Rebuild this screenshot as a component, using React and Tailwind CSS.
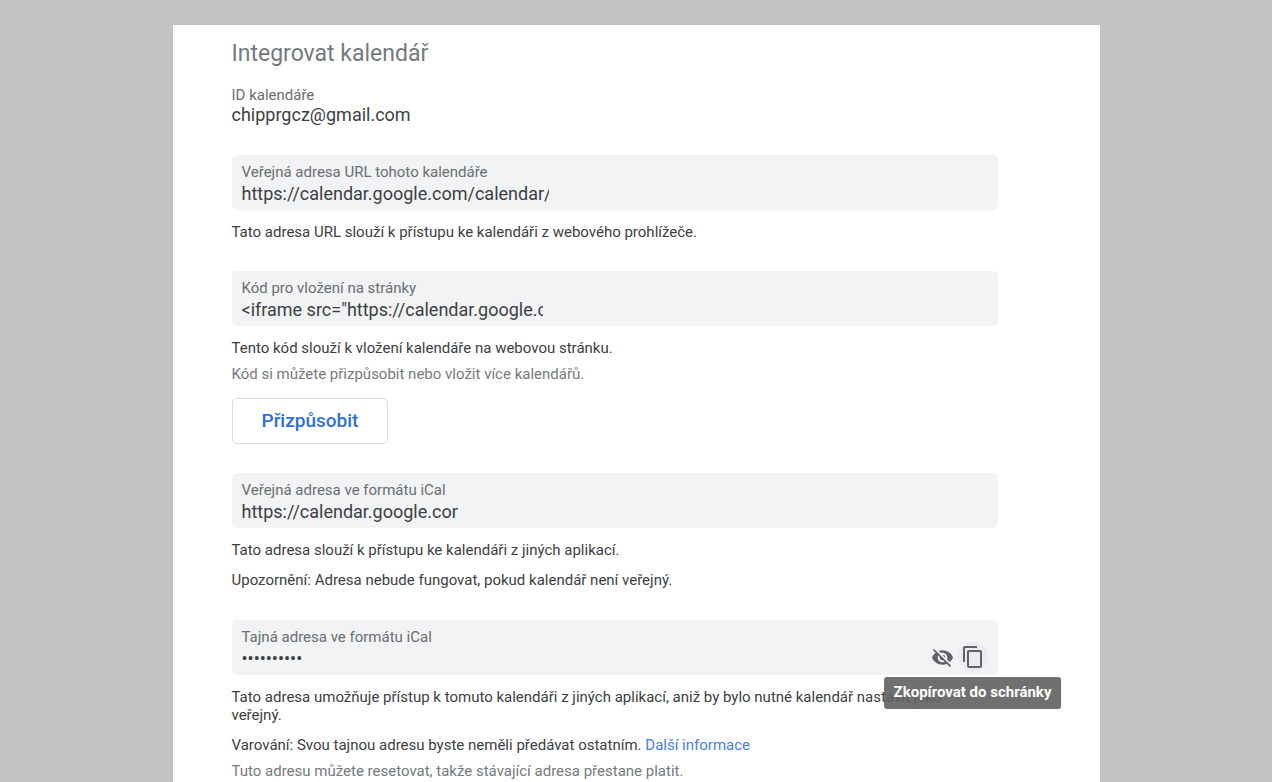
import React, { useState } from 'react';
import { MdVisibility, MdVisibilityOff } from 'react-icons/md';

// Grey box with a small label above a read-only value
const AddressField = ({ id, label, value, inputClass, type = 'text', children }) => {
  return (
    <div className="flex items-end justify-between h-[55px] px-[10px] bg-[#f1f3f4] rounded-[5px]">
      <div className="flex flex-col h-full pt-2">
        <label htmlFor={id} className="text-[15px] leading-[18px] text-[#6b6e72]">
          {label}
        </label>
        <input
          id={id}
          type={type}
          value={value}
          readOnly
          className={`h-6 text-[18px] text-[#3c4043] bg-transparent outline-none ${inputClass}`}
        />
      </div>
      {children}
    </div>
  );
};

const CopyIcon = () => (
  <svg viewBox="0 0 24 24" className="w-6 h-6" fill="currentColor" aria-hidden="true">
    <path d="M16 1H4c-1.1 0-2 .9-2 2v14h2V3h12V1zm3 4H8c-1.1 0-2 .9-2 2v14c0 1.1.9 2 2 2h11c1.1 0 2-.9 2-2V7c0-1.1-.9-2-2-2zm0 16H8V7h11v14z" />
  </svg>
);

const SecretActions = ({ visible, onToggle }) => {
  return (
    <div className="flex items-center pb-[3px] text-[#5f6368]">
      <button
        type="button"
        aria-label="Zobrazit adresu"
        onClick={onToggle}
        className="flex items-center justify-center w-[30px] h-[30px] rounded-full"
      >
        {visible ? <MdVisibility size={23} /> : <MdVisibilityOff size={23} />}
      </button>
      <div className="relative">
        <button
          type="button"
          aria-labelledby="copy-tooltip"
          className="flex items-center justify-center w-[30px] h-[30px] rounded-full bg-[#e9ebec]"
        >
          <CopyIcon />
        </button>
        {/* Tooltip hangs below the copy button */}
        <div
          id="copy-tooltip"
          role="tooltip"
          className="absolute top-full left-1/2 z-10 mt-[5px] -translate-x-1/2 px-[10px] h-8 rounded-[3px] bg-[#616161]/90 text-[15px] leading-[30px] font-bold text-white whitespace-nowrap"
        >
          Zkopírovat do schránky
        </div>
      </div>
    </div>
  );
};

const App = () => {
  const [visible, setVisible] = useState(false);

  return (
    <div className="flex flex-col min-h-screen px-4 pt-[25px] bg-[#c2c2c2] font-['Roboto',sans-serif] text-[15px] leading-[18px] text-[#3c4043]">
      <main className="flex-1 w-full max-w-[927px] mx-auto pt-[13px] pl-[59px] pr-[102px] bg-white">
        <h1 className="text-[23px] leading-8 text-[#757a7e]">Integrovat kalendář</h1>

        <div className="mt-4">
          <p className="text-[#6b6e72]">ID kalendáře</p>
          <p className="text-[18px] leading-[22px]">chipprgcz@gmail.com</p>
        </div>

        {/* Public URL */}
        <section className="mt-[29px]">
          <AddressField
            id="public-url"
            label="Veřejná adresa URL tohoto kalendáře"
            value="https://calendar.google.com/calendar/"
            inputClass="w-[307px]"
          />
          <p className="mt-[13px]">Tato adresa URL slouží k přístupu ke kalendáři z webového prohlížeče.</p>
        </section>

        {/* Embed code */}
        <section className="mt-[30px]">
          <AddressField
            id="embed-code"
            label="Kód pro vložení na stránky"
            value={'<iframe src="https://calendar.google.com'}
            inputClass="w-[301px]"
          />
          <p className="mt-[13px]">Tento kód slouží k vložení kalendáře na webovou stránku.</p>
          <p className="mt-2 text-[#757a7e]">Kód si můžete přizpůsobit nebo vložit více kalendářů.</p>
          <button
            type="button"
            className="mt-[15px] h-[46px] px-[29px] border border-[#dadce0] rounded-[5px] text-[19px] font-medium text-[#2f6fd6]"
          >
            Přizpůsobit
          </button>
        </section>

        {/* Public iCal address */}
        <section className="mt-[29px]">
          <AddressField
            id="public-ical"
            label="Veřejná adresa ve formátu iCal"
            value="https://calendar.google.com"
            inputClass="w-[216px]"
          />
          <p className="mt-[13px]">Tato adresa slouží k přístupu ke kalendáři z jiných aplikací.</p>
          <p className="mt-3">Upozornění: Adresa nebude fungovat, pokud kalendář není veřejný.</p>
        </section>

        {/* Secret iCal address */}
        <section className="mt-[31px]">
          <AddressField
            id="secret-ical"
            label="Tajná adresa ve formátu iCal"
            value="calendar10"
            type={visible ? 'text' : 'password'}
            inputClass="w-[216px]"
          >
            <SecretActions visible={visible} onToggle={() => setVisible(!visible)} />
          </AddressField>
          <p className="mt-[13px] pr-10">
            Tato adresa umožňuje přístup k tomuto kalendáři z jiných aplikací, aniž by bylo nutné kalendář nastavit jako
            veřejný.
          </p>
          <p className="mt-3">
            Varování: Svou tajnou adresu byste neměli předávat ostatním.{' '}
            <a href="#dalsi-informace" className="text-[#4a7fe0]">Další informace</a>
          </p>
          <p className="mt-2 text-[#757a7e]">Tuto adresu můžete resetovat, takže stávající adresa přestane platit.</p>
        </section>
      </main>
    </div>
  );
};

export default App;
